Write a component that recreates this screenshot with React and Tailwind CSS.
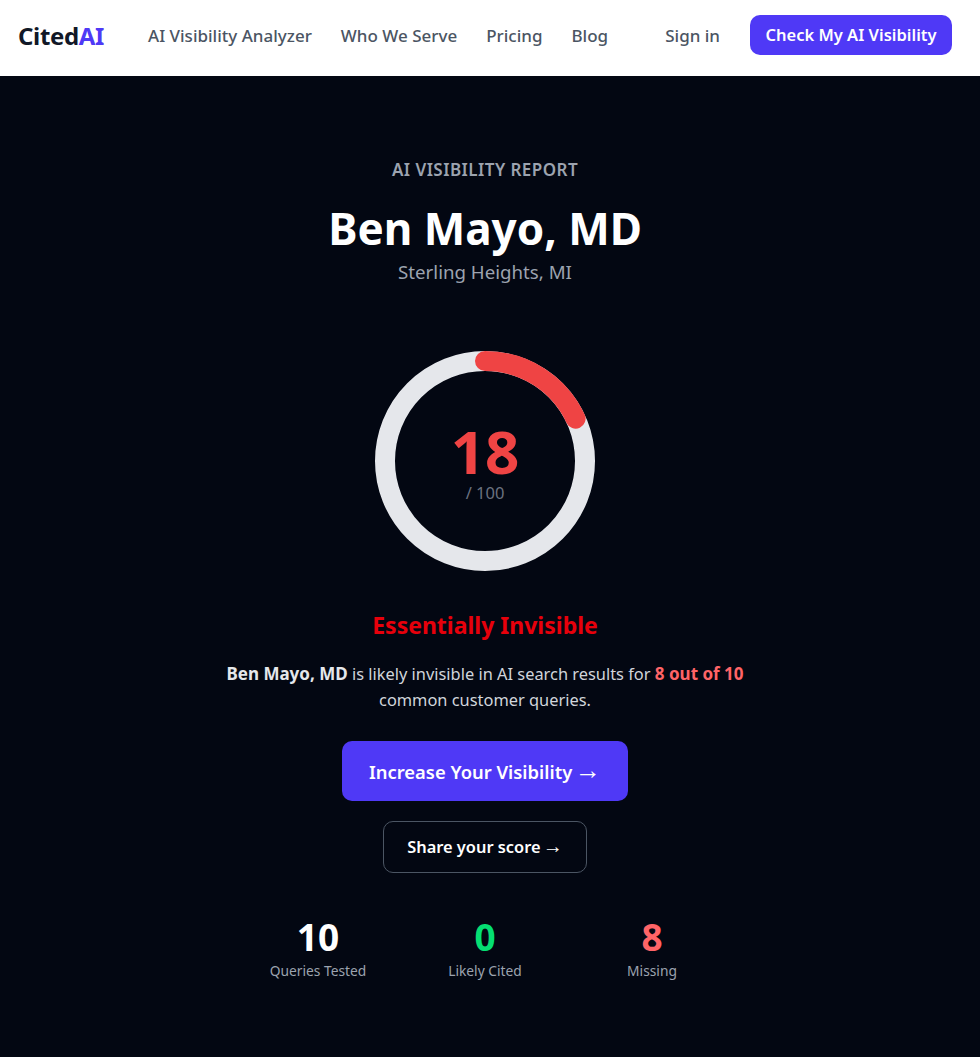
const font = "font-['Noto_Sans','Open_Sans',sans-serif]"
const arrow = "font-['Liberation_Sans',sans-serif] font-normal leading-none -ml-[2px]"

function ScoreRing() {
  const circumference = 2 * Math.PI * 100
  return (
    <div className="relative w-[220px] h-[220px]">
      <svg width="220" height="220" viewBox="0 0 220 220" className="-rotate-90">
        <circle cx="110" cy="110" r="100" fill="none" stroke="#e5e7eb" strokeWidth="20" />
        <circle
          cx="110"
          cy="110"
          r="100"
          fill="none"
          stroke="#ef4444"
          strokeWidth="20"
          strokeLinecap="round"
          strokeDasharray={`${circumference * 0.18} ${circumference}`}
        />
      </svg>
      <div className="absolute inset-0 pt-[4px] flex flex-col items-center justify-center">
        <span className="text-[60px] leading-[60px] font-bold text-[#ef4444]">18</span>
        <span className="text-[16.5px] leading-[24px] text-[#6b7280]">/ 100</span>
      </div>
    </div>
  )
}

function Stat({ value, label, color }) {
  return (
    <div className="w-[167px] flex flex-col items-center">
      <span className={`text-[37px] leading-[40px] font-bold ${color}`}>{value}</span>
      <span className="text-[13.8px] leading-[20px] text-[#9ca3af] mt-[4px]">{label}</span>
    </div>
  )
}

export default function App() {
  return (
    <div className={`${font} min-h-[1057px] bg-[#030712]`}>
      <header className="h-[76px] bg-white flex items-center pl-[18px] pr-[28px] pb-[6px]">
        <div className="mt-[1px] text-[24px] font-bold text-[#111827] tracking-[-0.35px]">
          Cited<span className="text-[#4f39f6]">AI</span>
        </div>
        <nav className="mt-[2px] flex items-center gap-[29px] ml-[44px] text-[17px] font-medium text-[#4b5563]">
          <span>AI Visibility Analyzer</span>
          <span>Who We Serve</span>
          <span>Pricing</span>
          <span>Blog</span>
        </nav>
        <div className="ml-auto flex items-center gap-[30px]">
          <span className="mt-[2px] text-[17px] font-medium text-[#4b5563]">Sign in</span>
          <button className="h-[40px] w-[202px] pt-[1px] rounded-[10px] bg-[#4f39f6] text-white text-[16.5px] font-semibold">
            Check My AI Visibility
          </button>
        </div>
      </header>
      <main className="pr-[10px] pt-[80px] flex flex-col items-center">
        <p className="text-[17px] leading-[28px] font-semibold tracking-[0.45px] text-[#9ca3af]">AI VISIBILITY REPORT</p>
        <h1 className="mt-[16px] text-[44px] leading-[56px] font-bold text-white">Ben Mayo, MD</h1>
        <p className="mt-[2px] text-[18.7px] leading-[28px] text-[#9ca3af]">Sterling Heights, MI</p>
        <div className="mt-[65px]">
          <ScoreRing />
        </div>
        <h2 className="mt-[36px] text-[23px] leading-[36px] font-bold text-[#e7000b]">Essentially Invisible</h2>
        <p className="mt-[18px] w-[576px] text-center text-[16.4px] leading-[26px] text-[#d1d5db]">
          <strong className="text-[17px] font-bold text-[#e5e7eb]">Ben Mayo, MD</strong> is likely invisible in AI search results for{' '}
          <strong className="text-[17px] font-bold text-[#ff6467]">8 out of 10</strong> common customer queries.
        </p>
        <button className="mt-[28px] h-[60px] w-[286px] pt-[1px] rounded-[10px] bg-[#4f39f6] text-white text-[18.4px] font-semibold">
          Increase Your Visibility <span className={`${arrow} text-[26px]`}>→</span>
        </button>
        <button className="mt-[20px] h-[52px] w-[204px] pt-[1px] rounded-[10px] border border-[#4b5563] text-white text-[16.4px] font-semibold">
          Share your score <span className={`${arrow} text-[20px]`}>→</span>
        </button>
        <div className="mt-[44px] flex">
          <Stat value="10" label="Queries Tested" color="text-white" />
          <Stat value="0" label="Likely Cited" color="text-[#05df72]" />
          <Stat value="8" label="Missing" color="text-[#ff6467]" />
        </div>
      </main>
    </div>
  )
}
